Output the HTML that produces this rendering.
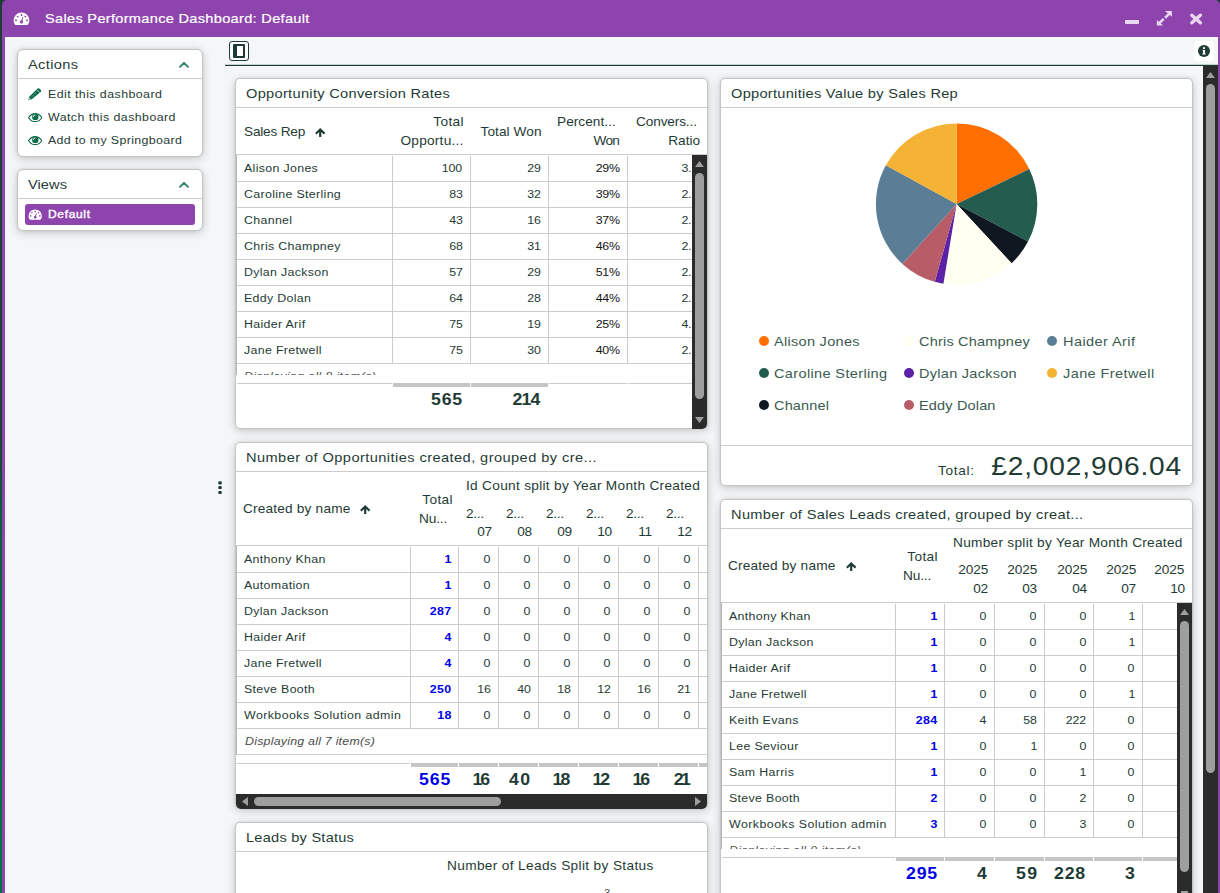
<!DOCTYPE html>
<html><head><meta charset="utf-8"><title>Sales Performance Dashboard</title>
<style>
*{box-sizing:border-box;margin:0;padding:0}
html,body{width:1220px;height:893px;overflow:hidden;background:#1d3f37;background:linear-gradient(to bottom,#1d3f37 0,#1d3f37 48%,#0f5a40 58%,#02704a 100%);font-family:"Liberation Sans",sans-serif;color:#1f3b35}
.a{position:absolute}
.t{position:absolute;white-space:nowrap}
.panel{position:absolute;background:#fff;border:1px solid #c4c4c4;box-shadow:0 2px 10px rgba(0,0,0,.19),0 0 3px rgba(0,0,0,.08)}
#clip{position:absolute;left:0;top:0;width:1220px;height:893px;overflow:hidden}
</style></head><body><div id="clip">
<div class="a" style="left:2px;top:0px;width:1218px;height:893px;background:#8e44ad;border-top-left-radius:5px;border-top-right-radius:5px"></div>
<div class="a" style="left:5px;top:37px;width:1213px;height:856px;background:#f4f6f8;"></div>
<svg class="a" style="left:12.6px;top:11.7px" width="17" height="14" viewBox="0 0 18 15" preserveAspectRatio="none"><path d="M9 0.6 A8.3 8.3 0 0 0 0.7 8.9 C0.7 10.6 1.2 12.2 2 13.4 C2.2 13.7 2.5 13.8 2.8 13.8 L15.2 13.8 C15.5 13.8 15.8 13.7 16 13.4 C16.8 12.2 17.3 10.6 17.3 8.9 A8.3 8.3 0 0 0 9 0.6 Z" fill="#fff"/><g fill="#8e44ad"><circle cx="9" cy="3.2" r="1"/><circle cx="4.9" cy="4.9" r="1"/><circle cx="13.1" cy="4.9" r="1"/><circle cx="3.2" cy="8.9" r="1"/><circle cx="14.8" cy="8.9" r="1"/><circle cx="9" cy="10.6" r="1.7"/><path d="M8.4 10.4 L10 5.4 L10.9 5.7 L9.6 10.8 Z"/></g></svg>
<div class="t" style="top:9.35px;font-size:13.4px;line-height:20px;left:45.4px;color:#fff;letter-spacing:0.272px;transform:scaleX(1.09);transform-origin:0 50%;-webkit-text-stroke:.2px #fff;">Sales Performance Dashboard: Default</div>
<div class="a" style="left:1125.2px;top:20px;width:13.6px;height:4px;background:#ead8f3;border-radius:1px"></div>
<svg class="a" style="left:1156px;top:10px" width="17" height="17" viewBox="0 0 17 17"><g fill="#ead8f3"><path d="M9.0 1.0 L15.9 1.0 L15.9 6.8 Z"/><path d="M0.9 9.9 L0.9 15.6 L7.1 15.6 Z"/></g><g stroke="#ead8f3" stroke-width="2.5" fill="none"><path d="M14 2.9 L9.1 7.8"/><path d="M2.8 13.7 L7.7 8.9"/></g></svg>
<svg class="a" style="left:1189px;top:12px" width="14" height="14" viewBox="0 0 14 14"><path d="M2.8 3.2 L11.4 10.8 M11.4 3.2 L2.8 10.8" stroke="#ead8f3" stroke-width="3.3" stroke-linecap="round" fill="none"/></svg>
<div class="panel" style="left:17px;top:49px;width:186px;height:108px;border-radius:6px"></div>
<div class="a" style="left:18px;top:78px;width:184px;height:1px;background:#cccccc;"></div>
<div class="t" style="top:55.15px;font-size:13.4px;line-height:20px;left:28.4px;letter-spacing:0.321px;transform:scaleX(1.09);transform-origin:0 50%;">Actions</div>
<svg class="a" style="left:179px;top:61px" width="10" height="7" viewBox="0 0 10 7"><path d="M1 5.8 L5 1.8 L9 5.8" stroke="#2f8265" stroke-width="1.9" fill="none" stroke-linecap="round" stroke-linejoin="round"/></svg>
<div class="panel" style="left:17px;top:169px;width:186px;height:62px;border-radius:6px"></div>
<div class="a" style="left:18px;top:198px;width:184px;height:1px;background:#cccccc;"></div>
<div class="t" style="top:175.15px;font-size:13.4px;line-height:20px;left:28.4px;letter-spacing:0.069px;transform:scaleX(1.09);transform-origin:0 50%;">Views</div>
<svg class="a" style="left:179px;top:181px" width="10" height="7" viewBox="0 0 10 7"><path d="M1 5.8 L5 1.8 L9 5.8" stroke="#2f8265" stroke-width="1.9" fill="none" stroke-linecap="round" stroke-linejoin="round"/></svg>
<svg class="a" style="left:28px;top:87.8px" width="13.4" height="12.4" viewBox="0 0 13.4 12.4"><path d="M0.3 12.2 L1.2 8.7 L9.6 0.5 Q10.4 0 11.3 0.5 L12.9 2.1 Q13.4 2.9 12.9 3.7 L3.8 11.3 Z" fill="#0d6b47"/><path d="M8.7 1.5 L11.8 4.6" stroke="#fff" stroke-width="0.7" fill="none"/><path d="M3.6 8.9 L9 3.6" stroke="#fff" stroke-width="0.5" stroke-dasharray="1 0.6" fill="none" opacity=".8"/><path d="M1.0 11.5 L1.5 9.7 L2.8 11 Z" fill="#fff"/></svg>
<svg class="a" style="left:28px;top:112.9px" width="14.4" height="9.2" viewBox="0 0 14.4 9.2"><path d="M0.5 4.7 C2 2.2 4.4 0.6 7.2 0.6 C10 0.6 12.4 2.2 13.9 4.7 C12.4 7.1 10 8.6 7.2 8.6 C4.4 8.6 2 7.1 0.5 4.7 Z" fill="#fff" stroke="#0d6b47" stroke-width="1.15"/><circle cx="7.3" cy="3.9" r="3.2" fill="#0d6b47"/><path d="M5.3 3.6 A1.9 1.9 0 0 1 7 1.9" stroke="#fff" stroke-width="0.9" fill="none" stroke-linecap="round"/></svg>
<svg class="a" style="left:28px;top:135.9px" width="14.4" height="9.2" viewBox="0 0 14.4 9.2"><path d="M0.5 4.7 C2 2.2 4.4 0.6 7.2 0.6 C10 0.6 12.4 2.2 13.9 4.7 C12.4 7.1 10 8.6 7.2 8.6 C4.4 8.6 2 7.1 0.5 4.7 Z" fill="#fff" stroke="#0d6b47" stroke-width="1.15"/><circle cx="7.3" cy="3.9" r="3.2" fill="#0d6b47"/><path d="M5.3 3.6 A1.9 1.9 0 0 1 7 1.9" stroke="#fff" stroke-width="0.9" fill="none" stroke-linecap="round"/></svg>
<div class="t" style="top:83.85px;font-size:11.7px;line-height:20px;left:48.4px;letter-spacing:0.410px;transform:scaleX(1.06);transform-origin:0 50%;">Edit this dashboard</div>
<div class="t" style="top:106.85px;font-size:11.7px;line-height:20px;left:48.4px;letter-spacing:0.403px;transform:scaleX(1.06);transform-origin:0 50%;">Watch this dashboard</div>
<div class="t" style="top:129.85px;font-size:11.7px;line-height:20px;left:48.4px;letter-spacing:0.337px;transform:scaleX(1.06);transform-origin:0 50%;">Add to my Springboard</div>
<div class="a" style="left:25px;top:204px;width:170px;height:21px;background:#8e44ad;border-radius:3px"></div>
<svg class="a" style="left:27.9px;top:208.9px" width="14.4" height="11.6" viewBox="0 0 18 15" preserveAspectRatio="none"><path d="M9 0.6 A8.3 8.3 0 0 0 0.7 8.9 C0.7 10.6 1.2 12.2 2 13.4 C2.2 13.7 2.5 13.8 2.8 13.8 L15.2 13.8 C15.5 13.8 15.8 13.7 16 13.4 C16.8 12.2 17.3 10.6 17.3 8.9 A8.3 8.3 0 0 0 9 0.6 Z" fill="#fff"/><g fill="#8e44ad"><circle cx="9" cy="3.2" r="1"/><circle cx="4.9" cy="4.9" r="1"/><circle cx="13.1" cy="4.9" r="1"/><circle cx="3.2" cy="8.9" r="1"/><circle cx="14.8" cy="8.9" r="1"/><circle cx="9" cy="10.6" r="1.7"/><path d="M8.4 10.4 L10 5.4 L10.9 5.7 L9.6 10.8 Z"/></g></svg>
<div class="t" style="top:204.35px;font-size:11.3px;line-height:20px;left:48.2px;color:#fff;letter-spacing:0.636px;transform:scaleX(1.06);transform-origin:0 50%;-webkit-text-stroke:.4px #fff;">Default</div>
<svg class="a" style="left:218px;top:480px" width="5" height="15" viewBox="0 0 5 15"><g fill="#1f3b35"><rect x="0.3" y="1.3" width="3.5" height="3.2" rx="1.2"/><rect x="0.3" y="6.1" width="3.5" height="3.0" rx="1.2"/><rect x="0.3" y="10.9" width="3.5" height="3.0" rx="1.2"/></g></svg>
<div class="a" style="left:229px;top:41px;width:20px;height:20px;background:#fff;border:1px solid #1f3b35;border-radius:3px"></div>
<div class="a" style="left:233px;top:44px;width:12px;height:14px;background:transparent;border:2px solid #1f3b35;border-left-width:4px;border-radius:1px"></div>
<div class="a" style="left:225px;top:65px;width:993px;height:1px;background:#1f3b35;"></div>
<div class="a" style="left:225px;top:64px;width:993px;height:1px;background:rgba(31,59,53,.22);"></div>
<div class="a" style="left:1194px;top:41px;width:20px;height:20px;background:#fff;border-radius:3px"></div>
<svg class="a" style="left:1198px;top:45px" width="12" height="12" viewBox="0 0 12 12"><circle cx="6" cy="6" r="6" fill="#1f3b35"/><circle cx="6" cy="3.1" r="1.15" fill="#fff"/><path d="M4.6 5 L7 5 L7 8.4 L7.7 8.4 L7.7 9.5 L4.4 9.5 L4.4 8.4 L5.1 8.4 L5.1 6.1 L4.6 6.1 Z" fill="#fff"/></svg>
<div class="a" style="left:1203px;top:66px;width:15px;height:827px;background:#2b2b2b;"></div>
<svg class="a" style="left:1206px;top:72px" width="9" height="6" viewBox="0 0 9 6"><path d="M4.5 0 L9 6 L0 6 Z" fill="#9e9e9e"/></svg>
<div class="a" style="left:1206px;top:84px;width:9px;height:689px;background:#9e9e9e;border-radius:4.5px"></div>
<div class="panel" style="left:235px;top:78px;width:473px;height:351px;border-radius:5px"></div>
<div class="a" style="left:236px;top:107px;width:471px;height:1px;background:#cccccc;"></div>
<div class="t" style="top:84.15px;font-size:13.4px;line-height:20px;left:246.4px;letter-spacing:0.283px;transform:scaleX(1.09);transform-origin:0 50%;">Opportunity Conversion Rates</div>
<div class="a" style="left:236px;top:154px;width:471px;height:1px;background:#cccccc;"></div>
<div class="t" style="top:121.65px;font-size:12.9px;line-height:20px;left:243.6px;letter-spacing:-0.199px;transform:scaleX(1.06);transform-origin:0 50%;">Sales Rep</div>
<svg class="a" style="left:314.5px;top:127.8px" width="10.4" height="9.2" viewBox="0 0 10.4 9.2"><path d="M5.2 0 L10.3 4.9 L8.8 6.4 L6.3 4.0 L6.3 9.2 L4.1 9.2 L4.1 4.0 L1.6 6.4 L0.1 4.9 Z" fill="#1f3b35"/></svg>
<div class="t" style="top:111.65px;font-size:12.9px;line-height:20px;right:756.02px;letter-spacing:0.358px;transform:scaleX(1.06);transform-origin:100% 50%;">Total</div>
<div class="t" style="top:130.65px;font-size:12.9px;line-height:20px;right:756.16px;letter-spacing:0.230px;transform:scaleX(1.06);transform-origin:100% 50%;">Opportu...</div>
<div class="t" style="top:121.65px;font-size:12.9px;line-height:20px;right:678.54px;letter-spacing:0.053px;transform:scaleX(1.06);transform-origin:100% 50%;">Total Won</div>
<div class="t" style="top:111.65px;font-size:12.9px;line-height:20px;left:556.6px;letter-spacing:0.029px;transform:scaleX(1.06);transform-origin:0 50%;">Percent...</div>
<div class="t" style="top:130.65px;font-size:12.9px;line-height:20px;right:600.33px;letter-spacing:-0.693px;transform:scaleX(1.06);transform-origin:100% 50%;">Won</div>
<div class="t" style="top:111.65px;font-size:12.9px;line-height:20px;left:635.6px;letter-spacing:-0.138px;transform:scaleX(1.06);transform-origin:0 50%;">Convers...</div>
<div class="t" style="top:130.65px;font-size:12.9px;line-height:20px;right:519.98px;letter-spacing:0.018px;transform:scaleX(1.06);transform-origin:100% 50%;">Ratio</div>
<div class="a" style="left:236px;top:155px;width:1px;height:220px;background:#b8b8b8;"></div>
<div class="a" style="left:237px;top:181px;width:455px;height:1px;background:#cccccc;"></div>
<div class="t" style="top:158.35px;font-size:11.7px;line-height:20px;left:244.4px;letter-spacing:0.305px;transform:scaleX(1.06);transform-origin:0 50%;">Alison Jones</div>
<div class="t" style="top:158.35px;font-size:11.7px;line-height:20px;right:757.61px;letter-spacing:-0.200px;transform:scaleX(1.06);transform-origin:100% 50%;">100</div>
<div class="t" style="top:158.35px;font-size:11.7px;line-height:20px;right:679.61px;letter-spacing:-0.200px;transform:scaleX(1.06);transform-origin:100% 50%;">29</div>
<div class="t" style="top:158.35px;font-size:11.7px;line-height:20px;right:600.01px;color:#151515;letter-spacing:-0.200px;transform:scaleX(1.06);transform-origin:100% 50%;">29%</div>
<div class="t" style="top:158.35px;font-size:11.7px;line-height:20px;right:528.61px;letter-spacing:-0.200px;transform:scaleX(1.06);transform-origin:100% 50%;">3.</div>
<div class="a" style="left:237px;top:207px;width:455px;height:1px;background:#cccccc;"></div>
<div class="t" style="top:184.35px;font-size:11.7px;line-height:20px;left:244.4px;letter-spacing:0.305px;transform:scaleX(1.06);transform-origin:0 50%;">Caroline Sterling</div>
<div class="t" style="top:184.35px;font-size:11.7px;line-height:20px;right:757.61px;letter-spacing:-0.200px;transform:scaleX(1.06);transform-origin:100% 50%;">83</div>
<div class="t" style="top:184.35px;font-size:11.7px;line-height:20px;right:679.61px;letter-spacing:-0.200px;transform:scaleX(1.06);transform-origin:100% 50%;">32</div>
<div class="t" style="top:184.35px;font-size:11.7px;line-height:20px;right:600.01px;color:#151515;letter-spacing:-0.200px;transform:scaleX(1.06);transform-origin:100% 50%;">39%</div>
<div class="t" style="top:184.35px;font-size:11.7px;line-height:20px;right:528.61px;letter-spacing:-0.200px;transform:scaleX(1.06);transform-origin:100% 50%;">2.</div>
<div class="a" style="left:237px;top:233px;width:455px;height:1px;background:#cccccc;"></div>
<div class="t" style="top:210.35px;font-size:11.7px;line-height:20px;left:244.4px;letter-spacing:0.305px;transform:scaleX(1.06);transform-origin:0 50%;">Channel</div>
<div class="t" style="top:210.35px;font-size:11.7px;line-height:20px;right:757.61px;letter-spacing:-0.200px;transform:scaleX(1.06);transform-origin:100% 50%;">43</div>
<div class="t" style="top:210.35px;font-size:11.7px;line-height:20px;right:679.61px;letter-spacing:-0.200px;transform:scaleX(1.06);transform-origin:100% 50%;">16</div>
<div class="t" style="top:210.35px;font-size:11.7px;line-height:20px;right:600.01px;color:#151515;letter-spacing:-0.200px;transform:scaleX(1.06);transform-origin:100% 50%;">37%</div>
<div class="t" style="top:210.35px;font-size:11.7px;line-height:20px;right:528.61px;letter-spacing:-0.200px;transform:scaleX(1.06);transform-origin:100% 50%;">2.</div>
<div class="a" style="left:237px;top:259px;width:455px;height:1px;background:#cccccc;"></div>
<div class="t" style="top:236.35px;font-size:11.7px;line-height:20px;left:244.4px;letter-spacing:0.305px;transform:scaleX(1.06);transform-origin:0 50%;">Chris Champney</div>
<div class="t" style="top:236.35px;font-size:11.7px;line-height:20px;right:757.61px;letter-spacing:-0.200px;transform:scaleX(1.06);transform-origin:100% 50%;">68</div>
<div class="t" style="top:236.35px;font-size:11.7px;line-height:20px;right:679.61px;letter-spacing:-0.200px;transform:scaleX(1.06);transform-origin:100% 50%;">31</div>
<div class="t" style="top:236.35px;font-size:11.7px;line-height:20px;right:600.01px;color:#151515;letter-spacing:-0.200px;transform:scaleX(1.06);transform-origin:100% 50%;">46%</div>
<div class="t" style="top:236.35px;font-size:11.7px;line-height:20px;right:528.61px;letter-spacing:-0.200px;transform:scaleX(1.06);transform-origin:100% 50%;">2.</div>
<div class="a" style="left:237px;top:285px;width:455px;height:1px;background:#cccccc;"></div>
<div class="t" style="top:262.35px;font-size:11.7px;line-height:20px;left:244.4px;letter-spacing:0.305px;transform:scaleX(1.06);transform-origin:0 50%;">Dylan Jackson</div>
<div class="t" style="top:262.35px;font-size:11.7px;line-height:20px;right:757.61px;letter-spacing:-0.200px;transform:scaleX(1.06);transform-origin:100% 50%;">57</div>
<div class="t" style="top:262.35px;font-size:11.7px;line-height:20px;right:679.61px;letter-spacing:-0.200px;transform:scaleX(1.06);transform-origin:100% 50%;">29</div>
<div class="t" style="top:262.35px;font-size:11.7px;line-height:20px;right:600.01px;color:#151515;letter-spacing:-0.200px;transform:scaleX(1.06);transform-origin:100% 50%;">51%</div>
<div class="t" style="top:262.35px;font-size:11.7px;line-height:20px;right:528.61px;letter-spacing:-0.200px;transform:scaleX(1.06);transform-origin:100% 50%;">2.</div>
<div class="a" style="left:237px;top:311px;width:455px;height:1px;background:#cccccc;"></div>
<div class="t" style="top:288.35px;font-size:11.7px;line-height:20px;left:244.4px;letter-spacing:0.305px;transform:scaleX(1.06);transform-origin:0 50%;">Eddy Dolan</div>
<div class="t" style="top:288.35px;font-size:11.7px;line-height:20px;right:757.61px;letter-spacing:-0.200px;transform:scaleX(1.06);transform-origin:100% 50%;">64</div>
<div class="t" style="top:288.35px;font-size:11.7px;line-height:20px;right:679.61px;letter-spacing:-0.200px;transform:scaleX(1.06);transform-origin:100% 50%;">28</div>
<div class="t" style="top:288.35px;font-size:11.7px;line-height:20px;right:600.01px;color:#151515;letter-spacing:-0.200px;transform:scaleX(1.06);transform-origin:100% 50%;">44%</div>
<div class="t" style="top:288.35px;font-size:11.7px;line-height:20px;right:528.61px;letter-spacing:-0.200px;transform:scaleX(1.06);transform-origin:100% 50%;">2.</div>
<div class="a" style="left:237px;top:337px;width:455px;height:1px;background:#cccccc;"></div>
<div class="t" style="top:314.35px;font-size:11.7px;line-height:20px;left:244.4px;letter-spacing:0.305px;transform:scaleX(1.06);transform-origin:0 50%;">Haider Arif</div>
<div class="t" style="top:314.35px;font-size:11.7px;line-height:20px;right:757.61px;letter-spacing:-0.200px;transform:scaleX(1.06);transform-origin:100% 50%;">75</div>
<div class="t" style="top:314.35px;font-size:11.7px;line-height:20px;right:679.61px;letter-spacing:-0.200px;transform:scaleX(1.06);transform-origin:100% 50%;">19</div>
<div class="t" style="top:314.35px;font-size:11.7px;line-height:20px;right:600.01px;color:#151515;letter-spacing:-0.200px;transform:scaleX(1.06);transform-origin:100% 50%;">25%</div>
<div class="t" style="top:314.35px;font-size:11.7px;line-height:20px;right:528.61px;letter-spacing:-0.200px;transform:scaleX(1.06);transform-origin:100% 50%;">4.</div>
<div class="a" style="left:237px;top:363px;width:455px;height:1px;background:#cccccc;"></div>
<div class="t" style="top:340.35px;font-size:11.7px;line-height:20px;left:244.4px;letter-spacing:0.305px;transform:scaleX(1.06);transform-origin:0 50%;">Jane Fretwell</div>
<div class="t" style="top:340.35px;font-size:11.7px;line-height:20px;right:757.61px;letter-spacing:-0.200px;transform:scaleX(1.06);transform-origin:100% 50%;">75</div>
<div class="t" style="top:340.35px;font-size:11.7px;line-height:20px;right:679.61px;letter-spacing:-0.200px;transform:scaleX(1.06);transform-origin:100% 50%;">30</div>
<div class="t" style="top:340.35px;font-size:11.7px;line-height:20px;right:600.01px;color:#151515;letter-spacing:-0.200px;transform:scaleX(1.06);transform-origin:100% 50%;">40%</div>
<div class="t" style="top:340.35px;font-size:11.7px;line-height:20px;right:528.61px;letter-spacing:-0.200px;transform:scaleX(1.06);transform-origin:100% 50%;">2.</div>
<div class="a" style="left:392px;top:156px;width:1px;height:208px;background:#cccccc;"></div>
<div class="a" style="left:470px;top:156px;width:1px;height:208px;background:#cccccc;"></div>
<div class="a" style="left:548px;top:156px;width:1px;height:208px;background:#cccccc;"></div>
<div class="a" style="left:627px;top:156px;width:1px;height:208px;background:#cccccc;"></div>
<div class="a" style="left:237px;top:364px;width:455px;height:11px;overflow:hidden"><div class="t" style="left:7.4px;top:2.3px;font-size:11.7px;line-height:20px;font-style:italic;color:#555;letter-spacing:.3px;transform:scaleX(1.06);transform-origin:0 50%">Displaying all 8 item(s)</div></div>
<div class="a" style="left:237px;top:383px;width:155px;height:1px;background:#cccccc;"></div>
<div class="a" style="left:549px;top:383px;width:78px;height:1px;background:#cccccc;"></div>
<div class="a" style="left:628px;top:383px;width:64px;height:1px;background:#cccccc;"></div>
<div class="a" style="left:393px;top:383px;width:77px;height:4px;background:#c6c6c6;"></div>
<div class="a" style="left:471px;top:383px;width:77px;height:4px;background:#c6c6c6;"></div>
<div class="a" style="left:627px;top:383px;width:1px;height:1px;background:#fff;"></div>
<div class="a" style="left:392px;top:383px;width:1px;height:1px;background:#fff;"></div>
<div class="t" style="top:388.95px;font-size:16.1px;line-height:20px;right:756.87px;font-weight:700;letter-spacing:0.659px;transform:scaleX(1.1);transform-origin:100% 50%;">565</div>
<div class="t" style="top:388.95px;font-size:16.1px;line-height:20px;right:680.47px;font-weight:700;letter-spacing:-0.795px;transform:scaleX(1.1);transform-origin:100% 50%;">214</div>
<div class="a" style="left:692px;top:155px;width:15px;height:274px;background:#2b2b2b;border-bottom-right-radius:5px"></div>
<svg class="a" style="left:695px;top:161px" width="9" height="6" viewBox="0 0 9 6"><path d="M4.5 0 L9 6 L0 6 Z" fill="#9e9e9e"/></svg>
<svg class="a" style="left:695.1px;top:417.3px" width="9" height="6" viewBox="0 0 9 6"><path d="M4.5 6 L9 0 L0 0 Z" fill="#9e9e9e"/></svg>
<div class="a" style="left:695px;top:173px;width:9px;height:226px;background:#9e9e9e;border-radius:4.5px"></div>
<div class="panel" style="left:720px;top:78px;width:473px;height:408px;border-radius:5px"></div>
<div class="a" style="left:721px;top:107px;width:471px;height:1px;background:#cccccc;"></div>
<div class="t" style="top:84.15px;font-size:13.4px;line-height:20px;left:731.4px;letter-spacing:0.259px;transform:scaleX(1.09);transform-origin:0 50%;">Opportunities Value by Sales Rep</div>
<svg class="a" style="left:0;top:0" width="1220" height="893" viewBox="0 0 1220 893"><path d="M956.6 204.1 L956.60 123.40 A80.7 80.7 0 0 1 1029.29 169.04 Z" fill="#ff6f00"/><path d="M956.6 204.1 L1029.29 169.04 A80.7 80.7 0 0 1 1028.05 241.61 Z" fill="#245c4f"/><path d="M956.6 204.1 L1028.05 241.61 A80.7 80.7 0 0 1 1011.53 263.22 Z" fill="#0f1820"/><path d="M956.6 204.1 L1011.53 263.22 A80.7 80.7 0 0 1 943.42 283.72 Z" fill="#fffff2"/><path d="M956.6 204.1 L943.42 283.72 A80.7 80.7 0 0 1 934.76 281.79 Z" fill="#5b21a6"/><path d="M956.6 204.1 L934.76 281.79 A80.7 80.7 0 0 1 902.39 263.88 Z" fill="#b85c68"/><path d="M956.6 204.1 L902.39 263.88 A80.7 80.7 0 0 1 885.81 165.35 Z" fill="#5b7d95"/><path d="M956.6 204.1 L885.81 165.35 A80.7 80.7 0 0 1 956.60 123.40 Z" fill="#f5b335"/></svg>
<div class="a" style="left:758.6px;top:336px;width:10px;height:10px;background:#ff6f00;border-radius:50%"></div>
<div class="t" style="top:331.75px;font-size:13.2px;line-height:20px;left:774.4px;color:#3b5a51;letter-spacing:0.270px;transform:scaleX(1.1);transform-origin:0 50%;">Alison Jones</div>
<div class="a" style="left:758.6px;top:368px;width:10px;height:10px;background:#245c4f;border-radius:50%"></div>
<div class="t" style="top:363.75px;font-size:13.2px;line-height:20px;left:774.4px;color:#3b5a51;letter-spacing:0.333px;transform:scaleX(1.1);transform-origin:0 50%;">Caroline Sterling</div>
<div class="a" style="left:758.6px;top:400px;width:10px;height:10px;background:#0f1820;border-radius:50%"></div>
<div class="t" style="top:395.75px;font-size:13.2px;line-height:20px;left:774.4px;color:#3b5a51;letter-spacing:0.138px;transform:scaleX(1.1);transform-origin:0 50%;">Channel</div>
<div class="a" style="left:903.6px;top:336px;width:10px;height:10px;background:#fffff2;border-radius:50%"></div>
<div class="t" style="top:331.75px;font-size:13.2px;line-height:20px;left:919.4px;color:#3b5a51;letter-spacing:0.183px;transform:scaleX(1.1);transform-origin:0 50%;">Chris Champney</div>
<div class="a" style="left:903.6px;top:368px;width:10px;height:10px;background:#5b21a6;border-radius:50%"></div>
<div class="t" style="top:363.75px;font-size:13.2px;line-height:20px;left:919.4px;color:#3b5a51;letter-spacing:0.252px;transform:scaleX(1.1);transform-origin:0 50%;">Dylan Jackson</div>
<div class="a" style="left:903.6px;top:400px;width:10px;height:10px;background:#b85c68;border-radius:50%"></div>
<div class="t" style="top:395.75px;font-size:13.2px;line-height:20px;left:919.4px;color:#3b5a51;letter-spacing:0.144px;transform:scaleX(1.1);transform-origin:0 50%;">Eddy Dolan</div>
<div class="a" style="left:1047.1px;top:336px;width:10px;height:10px;background:#5b7d95;border-radius:50%"></div>
<div class="t" style="top:331.75px;font-size:13.2px;line-height:20px;left:1062.8999999999999px;color:#3b5a51;letter-spacing:0.383px;transform:scaleX(1.1);transform-origin:0 50%;">Haider Arif</div>
<div class="a" style="left:1047.1px;top:368px;width:10px;height:10px;background:#f5b335;border-radius:50%"></div>
<div class="t" style="top:363.75px;font-size:13.2px;line-height:20px;left:1062.8999999999999px;color:#3b5a51;letter-spacing:0.371px;transform:scaleX(1.1);transform-origin:0 50%;">Jane Fretwell</div>
<div class="a" style="left:721px;top:445px;width:471px;height:1px;background:#cccccc;"></div>
<div class="t" style="top:461.15px;font-size:12.9px;line-height:20px;right:245.70px;letter-spacing:0.664px;transform:scaleX(1.06);transform-origin:100% 50%;">Total:</div>
<div class="t" style="top:449.85px;font-size:25.8px;line-height:32px;right:38.15px;letter-spacing:0.776px;transform:scaleX(1.09);transform-origin:100% 50%;">£2,002,906.04</div>
<div class="panel" style="left:235px;top:442px;width:473px;height:367px;border-radius:5px"></div>
<div class="a" style="left:236px;top:471px;width:471px;height:1px;background:#cccccc;"></div>
<div class="t" style="top:448.15px;font-size:13.4px;line-height:20px;left:246.4px;letter-spacing:0.396px;transform:scaleX(1.09);transform-origin:0 50%;">Number of Opportunities created, grouped by cre...</div>
<div class="a" style="left:236px;top:545px;width:471px;height:1px;background:#cccccc;"></div>
<div class="t" style="top:475.95px;font-size:12.9px;line-height:20px;left:466.4px;letter-spacing:0.283px;transform:scaleX(1.06);transform-origin:0 50%;">Id Count split by Year Month Created</div>
<div class="t" style="top:498.65px;font-size:12.9px;line-height:20px;left:243.0px;letter-spacing:0.169px;transform:scaleX(1.06);transform-origin:0 50%;">Created by name</div>
<svg class="a" style="left:360.4px;top:504.6px" width="10.4" height="9.2" viewBox="0 0 10.4 9.2"><path d="M5.2 0 L10.3 4.9 L8.8 6.4 L6.3 4.0 L6.3 9.2 L4.1 9.2 L4.1 4.0 L1.6 6.4 L0.1 4.9 Z" fill="#1f3b35"/></svg>
<div class="t" style="top:489.85px;font-size:12.9px;line-height:20px;right:767.32px;letter-spacing:0.358px;transform:scaleX(1.06);transform-origin:100% 50%;">Total</div>
<div class="t" style="top:508.65px;font-size:12.9px;line-height:20px;left:418.5px;letter-spacing:-0.136px;transform:scaleX(1.06);transform-origin:0 50%;">Nu...</div>
<div class="t" style="top:504.05px;font-size:12.9px;line-height:20px;left:466.4px;letter-spacing:-0.315px;transform:scaleX(1.06);transform-origin:0 50%;">2...</div>
<div class="t" style="top:522.05px;font-size:12.9px;line-height:20px;right:728.31px;letter-spacing:-0.200px;transform:scaleX(1.06);transform-origin:100% 50%;">07</div>
<div class="t" style="top:504.05px;font-size:12.9px;line-height:20px;left:506.4px;letter-spacing:-0.315px;transform:scaleX(1.06);transform-origin:0 50%;">2...</div>
<div class="t" style="top:522.05px;font-size:12.9px;line-height:20px;right:688.31px;letter-spacing:-0.200px;transform:scaleX(1.06);transform-origin:100% 50%;">08</div>
<div class="t" style="top:504.05px;font-size:12.9px;line-height:20px;left:546.4px;letter-spacing:-0.315px;transform:scaleX(1.06);transform-origin:0 50%;">2...</div>
<div class="t" style="top:522.05px;font-size:12.9px;line-height:20px;right:648.31px;letter-spacing:-0.200px;transform:scaleX(1.06);transform-origin:100% 50%;">09</div>
<div class="t" style="top:504.05px;font-size:12.9px;line-height:20px;left:586.4px;letter-spacing:-0.315px;transform:scaleX(1.06);transform-origin:0 50%;">2...</div>
<div class="t" style="top:522.05px;font-size:12.9px;line-height:20px;right:608.31px;letter-spacing:-0.200px;transform:scaleX(1.06);transform-origin:100% 50%;">10</div>
<div class="t" style="top:504.05px;font-size:12.9px;line-height:20px;left:626.4px;letter-spacing:-0.315px;transform:scaleX(1.06);transform-origin:0 50%;">2...</div>
<div class="t" style="top:522.05px;font-size:12.9px;line-height:20px;right:568.31px;letter-spacing:-0.200px;transform:scaleX(1.06);transform-origin:100% 50%;">11</div>
<div class="t" style="top:504.05px;font-size:12.9px;line-height:20px;left:666.4px;letter-spacing:-0.315px;transform:scaleX(1.06);transform-origin:0 50%;">2...</div>
<div class="t" style="top:522.05px;font-size:12.9px;line-height:20px;right:528.31px;letter-spacing:-0.200px;transform:scaleX(1.06);transform-origin:100% 50%;">12</div>
<div class="a" style="left:236px;top:546px;width:1px;height:209px;background:#b8b8b8;"></div>
<div class="a" style="left:237px;top:572px;width:470px;height:1px;background:#cccccc;"></div>
<div class="t" style="top:549.35px;font-size:11.7px;line-height:20px;left:244.0px;letter-spacing:0.305px;transform:scaleX(1.06);transform-origin:0 50%;">Anthony Khan</div>
<div class="t" style="top:549.35px;font-size:11.7px;line-height:20px;right:767.90px;font-weight:700;color:#0000e6;letter-spacing:0.381px;transform:scaleX(1.06);transform-origin:100% 50%;">1</div>
<div class="t" style="top:549.35px;font-size:11.7px;line-height:20px;right:729.41px;letter-spacing:-0.200px;transform:scaleX(1.06);transform-origin:100% 50%;">0</div>
<div class="t" style="top:549.35px;font-size:11.7px;line-height:20px;right:689.41px;letter-spacing:-0.200px;transform:scaleX(1.06);transform-origin:100% 50%;">0</div>
<div class="t" style="top:549.35px;font-size:11.7px;line-height:20px;right:649.41px;letter-spacing:-0.200px;transform:scaleX(1.06);transform-origin:100% 50%;">0</div>
<div class="t" style="top:549.35px;font-size:11.7px;line-height:20px;right:609.41px;letter-spacing:-0.200px;transform:scaleX(1.06);transform-origin:100% 50%;">0</div>
<div class="t" style="top:549.35px;font-size:11.7px;line-height:20px;right:569.41px;letter-spacing:-0.200px;transform:scaleX(1.06);transform-origin:100% 50%;">0</div>
<div class="t" style="top:549.35px;font-size:11.7px;line-height:20px;right:529.41px;letter-spacing:-0.200px;transform:scaleX(1.06);transform-origin:100% 50%;">0</div>
<div class="a" style="left:237px;top:598px;width:470px;height:1px;background:#cccccc;"></div>
<div class="t" style="top:575.35px;font-size:11.7px;line-height:20px;left:244.0px;letter-spacing:0.305px;transform:scaleX(1.06);transform-origin:0 50%;">Automation</div>
<div class="t" style="top:575.35px;font-size:11.7px;line-height:20px;right:767.90px;font-weight:700;color:#0000e6;letter-spacing:0.381px;transform:scaleX(1.06);transform-origin:100% 50%;">1</div>
<div class="t" style="top:575.35px;font-size:11.7px;line-height:20px;right:729.41px;letter-spacing:-0.200px;transform:scaleX(1.06);transform-origin:100% 50%;">0</div>
<div class="t" style="top:575.35px;font-size:11.7px;line-height:20px;right:689.41px;letter-spacing:-0.200px;transform:scaleX(1.06);transform-origin:100% 50%;">0</div>
<div class="t" style="top:575.35px;font-size:11.7px;line-height:20px;right:649.41px;letter-spacing:-0.200px;transform:scaleX(1.06);transform-origin:100% 50%;">0</div>
<div class="t" style="top:575.35px;font-size:11.7px;line-height:20px;right:609.41px;letter-spacing:-0.200px;transform:scaleX(1.06);transform-origin:100% 50%;">0</div>
<div class="t" style="top:575.35px;font-size:11.7px;line-height:20px;right:569.41px;letter-spacing:-0.200px;transform:scaleX(1.06);transform-origin:100% 50%;">0</div>
<div class="t" style="top:575.35px;font-size:11.7px;line-height:20px;right:529.41px;letter-spacing:-0.200px;transform:scaleX(1.06);transform-origin:100% 50%;">0</div>
<div class="a" style="left:237px;top:624px;width:470px;height:1px;background:#cccccc;"></div>
<div class="t" style="top:601.35px;font-size:11.7px;line-height:20px;left:244.0px;letter-spacing:0.305px;transform:scaleX(1.06);transform-origin:0 50%;">Dylan Jackson</div>
<div class="t" style="top:601.35px;font-size:11.7px;line-height:20px;right:768.60px;font-weight:700;color:#0000e6;letter-spacing:0.381px;transform:scaleX(1.06);transform-origin:100% 50%;">287</div>
<div class="t" style="top:601.35px;font-size:11.7px;line-height:20px;right:729.41px;letter-spacing:-0.200px;transform:scaleX(1.06);transform-origin:100% 50%;">0</div>
<div class="t" style="top:601.35px;font-size:11.7px;line-height:20px;right:689.41px;letter-spacing:-0.200px;transform:scaleX(1.06);transform-origin:100% 50%;">0</div>
<div class="t" style="top:601.35px;font-size:11.7px;line-height:20px;right:649.41px;letter-spacing:-0.200px;transform:scaleX(1.06);transform-origin:100% 50%;">0</div>
<div class="t" style="top:601.35px;font-size:11.7px;line-height:20px;right:609.41px;letter-spacing:-0.200px;transform:scaleX(1.06);transform-origin:100% 50%;">0</div>
<div class="t" style="top:601.35px;font-size:11.7px;line-height:20px;right:569.41px;letter-spacing:-0.200px;transform:scaleX(1.06);transform-origin:100% 50%;">0</div>
<div class="t" style="top:601.35px;font-size:11.7px;line-height:20px;right:529.41px;letter-spacing:-0.200px;transform:scaleX(1.06);transform-origin:100% 50%;">0</div>
<div class="a" style="left:237px;top:650px;width:470px;height:1px;background:#cccccc;"></div>
<div class="t" style="top:627.35px;font-size:11.7px;line-height:20px;left:244.0px;letter-spacing:0.305px;transform:scaleX(1.06);transform-origin:0 50%;">Haider Arif</div>
<div class="t" style="top:627.35px;font-size:11.7px;line-height:20px;right:768.60px;font-weight:700;color:#0000e6;letter-spacing:0.381px;transform:scaleX(1.06);transform-origin:100% 50%;">4</div>
<div class="t" style="top:627.35px;font-size:11.7px;line-height:20px;right:729.41px;letter-spacing:-0.200px;transform:scaleX(1.06);transform-origin:100% 50%;">0</div>
<div class="t" style="top:627.35px;font-size:11.7px;line-height:20px;right:689.41px;letter-spacing:-0.200px;transform:scaleX(1.06);transform-origin:100% 50%;">0</div>
<div class="t" style="top:627.35px;font-size:11.7px;line-height:20px;right:649.41px;letter-spacing:-0.200px;transform:scaleX(1.06);transform-origin:100% 50%;">0</div>
<div class="t" style="top:627.35px;font-size:11.7px;line-height:20px;right:609.41px;letter-spacing:-0.200px;transform:scaleX(1.06);transform-origin:100% 50%;">0</div>
<div class="t" style="top:627.35px;font-size:11.7px;line-height:20px;right:569.41px;letter-spacing:-0.200px;transform:scaleX(1.06);transform-origin:100% 50%;">0</div>
<div class="t" style="top:627.35px;font-size:11.7px;line-height:20px;right:529.41px;letter-spacing:-0.200px;transform:scaleX(1.06);transform-origin:100% 50%;">0</div>
<div class="a" style="left:237px;top:676px;width:470px;height:1px;background:#cccccc;"></div>
<div class="t" style="top:653.35px;font-size:11.7px;line-height:20px;left:244.0px;letter-spacing:0.305px;transform:scaleX(1.06);transform-origin:0 50%;">Jane Fretwell</div>
<div class="t" style="top:653.35px;font-size:11.7px;line-height:20px;right:768.60px;font-weight:700;color:#0000e6;letter-spacing:0.381px;transform:scaleX(1.06);transform-origin:100% 50%;">4</div>
<div class="t" style="top:653.35px;font-size:11.7px;line-height:20px;right:729.41px;letter-spacing:-0.200px;transform:scaleX(1.06);transform-origin:100% 50%;">0</div>
<div class="t" style="top:653.35px;font-size:11.7px;line-height:20px;right:689.41px;letter-spacing:-0.200px;transform:scaleX(1.06);transform-origin:100% 50%;">0</div>
<div class="t" style="top:653.35px;font-size:11.7px;line-height:20px;right:649.41px;letter-spacing:-0.200px;transform:scaleX(1.06);transform-origin:100% 50%;">0</div>
<div class="t" style="top:653.35px;font-size:11.7px;line-height:20px;right:609.41px;letter-spacing:-0.200px;transform:scaleX(1.06);transform-origin:100% 50%;">0</div>
<div class="t" style="top:653.35px;font-size:11.7px;line-height:20px;right:569.41px;letter-spacing:-0.200px;transform:scaleX(1.06);transform-origin:100% 50%;">0</div>
<div class="t" style="top:653.35px;font-size:11.7px;line-height:20px;right:529.41px;letter-spacing:-0.200px;transform:scaleX(1.06);transform-origin:100% 50%;">0</div>
<div class="a" style="left:237px;top:702px;width:470px;height:1px;background:#cccccc;"></div>
<div class="t" style="top:679.35px;font-size:11.7px;line-height:20px;left:244.0px;letter-spacing:0.305px;transform:scaleX(1.06);transform-origin:0 50%;">Steve Booth</div>
<div class="t" style="top:679.35px;font-size:11.7px;line-height:20px;right:768.60px;font-weight:700;color:#0000e6;letter-spacing:0.381px;transform:scaleX(1.06);transform-origin:100% 50%;">250</div>
<div class="t" style="top:679.35px;font-size:11.7px;line-height:20px;right:729.41px;letter-spacing:-0.200px;transform:scaleX(1.06);transform-origin:100% 50%;">16</div>
<div class="t" style="top:679.35px;font-size:11.7px;line-height:20px;right:689.41px;letter-spacing:-0.200px;transform:scaleX(1.06);transform-origin:100% 50%;">40</div>
<div class="t" style="top:679.35px;font-size:11.7px;line-height:20px;right:649.41px;letter-spacing:-0.200px;transform:scaleX(1.06);transform-origin:100% 50%;">18</div>
<div class="t" style="top:679.35px;font-size:11.7px;line-height:20px;right:609.41px;letter-spacing:-0.200px;transform:scaleX(1.06);transform-origin:100% 50%;">12</div>
<div class="t" style="top:679.35px;font-size:11.7px;line-height:20px;right:569.41px;letter-spacing:-0.200px;transform:scaleX(1.06);transform-origin:100% 50%;">16</div>
<div class="t" style="top:679.35px;font-size:11.7px;line-height:20px;right:529.41px;letter-spacing:-0.200px;transform:scaleX(1.06);transform-origin:100% 50%;">21</div>
<div class="a" style="left:237px;top:728px;width:470px;height:1px;background:#cccccc;"></div>
<div class="t" style="top:705.35px;font-size:11.7px;line-height:20px;left:244.0px;letter-spacing:0.398px;transform:scaleX(1.06);transform-origin:0 50%;">Workbooks Solution admin</div>
<div class="t" style="top:705.35px;font-size:11.7px;line-height:20px;right:768.60px;font-weight:700;color:#0000e6;letter-spacing:0.381px;transform:scaleX(1.06);transform-origin:100% 50%;">18</div>
<div class="t" style="top:705.35px;font-size:11.7px;line-height:20px;right:729.41px;letter-spacing:-0.200px;transform:scaleX(1.06);transform-origin:100% 50%;">0</div>
<div class="t" style="top:705.35px;font-size:11.7px;line-height:20px;right:689.41px;letter-spacing:-0.200px;transform:scaleX(1.06);transform-origin:100% 50%;">0</div>
<div class="t" style="top:705.35px;font-size:11.7px;line-height:20px;right:649.41px;letter-spacing:-0.200px;transform:scaleX(1.06);transform-origin:100% 50%;">0</div>
<div class="t" style="top:705.35px;font-size:11.7px;line-height:20px;right:609.41px;letter-spacing:-0.200px;transform:scaleX(1.06);transform-origin:100% 50%;">0</div>
<div class="t" style="top:705.35px;font-size:11.7px;line-height:20px;right:569.41px;letter-spacing:-0.200px;transform:scaleX(1.06);transform-origin:100% 50%;">0</div>
<div class="t" style="top:705.35px;font-size:11.7px;line-height:20px;right:529.41px;letter-spacing:-0.200px;transform:scaleX(1.06);transform-origin:100% 50%;">0</div>
<div class="a" style="left:410px;top:547px;width:1px;height:182px;background:#cccccc;"></div>
<div class="a" style="left:458px;top:547px;width:1px;height:182px;background:#cccccc;"></div>
<div class="a" style="left:498px;top:547px;width:1px;height:182px;background:#cccccc;"></div>
<div class="a" style="left:538px;top:547px;width:1px;height:182px;background:#cccccc;"></div>
<div class="a" style="left:578px;top:547px;width:1px;height:182px;background:#cccccc;"></div>
<div class="a" style="left:618px;top:547px;width:1px;height:182px;background:#cccccc;"></div>
<div class="a" style="left:658px;top:547px;width:1px;height:182px;background:#cccccc;"></div>
<div class="a" style="left:698px;top:547px;width:1px;height:182px;background:#cccccc;"></div>
<div class="t" style="top:731.15px;font-size:11.7px;line-height:20px;left:244.9px;color:#4d4d4d;letter-spacing:0.215px;font-style:italic;transform:scaleX(1.06);transform-origin:0 50%;">Displaying all 7 item(s)</div>
<div class="a" style="left:237px;top:754px;width:470px;height:1px;background:#d0d0d0;"></div>
<div class="a" style="left:237px;top:763px;width:173px;height:1px;background:#cccccc;"></div>
<div class="a" style="left:411px;top:763px;width:47px;height:4px;background:#c6c6c6;"></div>
<div class="a" style="left:459px;top:763px;width:39px;height:4px;background:#c6c6c6;"></div>
<div class="a" style="left:499px;top:763px;width:39px;height:4px;background:#c6c6c6;"></div>
<div class="a" style="left:539px;top:763px;width:39px;height:4px;background:#c6c6c6;"></div>
<div class="a" style="left:579px;top:763px;width:39px;height:4px;background:#c6c6c6;"></div>
<div class="a" style="left:619px;top:763px;width:39px;height:4px;background:#c6c6c6;"></div>
<div class="a" style="left:659px;top:763px;width:39px;height:4px;background:#c6c6c6;"></div>
<div class="a" style="left:699px;top:763px;width:8px;height:4px;background:#c6c6c6;"></div>
<div class="t" style="top:769.05px;font-size:16.1px;line-height:20px;right:768.27px;font-weight:700;color:#0000e6;letter-spacing:0.841px;transform:scaleX(1.1);transform-origin:100% 50%;">565</div>
<div class="t" style="top:769.05px;font-size:16.1px;line-height:20px;right:731.80px;font-weight:700;letter-spacing:-2.000px;transform:scaleX(1.1);transform-origin:100% 50%;">16</div>
<div class="t" style="top:769.05px;font-size:16.1px;line-height:20px;right:688.20px;font-weight:700;letter-spacing:1.273px;transform:scaleX(1.1);transform-origin:100% 50%;">40</div>
<div class="t" style="top:769.05px;font-size:16.1px;line-height:20px;right:651.50px;font-weight:700;letter-spacing:-1.727px;transform:scaleX(1.1);transform-origin:100% 50%;">18</div>
<div class="t" style="top:769.05px;font-size:16.1px;line-height:20px;right:611.80px;font-weight:700;letter-spacing:-2.000px;transform:scaleX(1.1);transform-origin:100% 50%;">12</div>
<div class="t" style="top:769.05px;font-size:16.1px;line-height:20px;right:571.80px;font-weight:700;letter-spacing:-2.000px;transform:scaleX(1.1);transform-origin:100% 50%;">16</div>
<div class="t" style="top:769.05px;font-size:16.1px;line-height:20px;right:532.10px;font-weight:700;letter-spacing:-2.272px;transform:scaleX(1.1);transform-origin:100% 50%;">21</div>
<div class="a" style="left:236px;top:794px;width:471px;height:15px;background:#2b2b2b;border-bottom-left-radius:5px;border-bottom-right-radius:5px"></div>
<svg class="a" style="left:242px;top:797px" width="6" height="9" viewBox="0 0 6 9"><path d="M0 4.5 L6 0 L6 9 Z" fill="#9e9e9e"/></svg>
<svg class="a" style="left:695px;top:797px" width="6" height="9" viewBox="0 0 6 9"><path d="M6 4.5 L0 0 L0 9 Z" fill="#9e9e9e"/></svg>
<div class="a" style="left:254px;top:797px;width:247px;height:9px;background:#9e9e9e;border-radius:4.5px"></div>
<div class="panel" style="left:720px;top:499px;width:473px;height:420px;border-radius:5px"></div>
<div class="a" style="left:721px;top:528px;width:471px;height:1px;background:#cccccc;"></div>
<div class="t" style="top:505.15px;font-size:13.4px;line-height:20px;left:731.4px;letter-spacing:0.320px;transform:scaleX(1.09);transform-origin:0 50%;">Number of Sales Leads created, grouped by creat...</div>
<div class="a" style="left:721px;top:602px;width:471px;height:1px;background:#cccccc;"></div>
<div class="t" style="top:532.55px;font-size:12.9px;line-height:20px;left:952.5px;letter-spacing:0.262px;transform:scaleX(1.06);transform-origin:0 50%;">Number split by Year Month Created</div>
<div class="t" style="top:555.75px;font-size:12.9px;line-height:20px;left:727.9px;letter-spacing:0.169px;transform:scaleX(1.06);transform-origin:0 50%;">Created by name</div>
<svg class="a" style="left:845.6px;top:561.6px" width="10.4" height="9.2" viewBox="0 0 10.4 9.2"><path d="M5.2 0 L10.3 4.9 L8.8 6.4 L6.3 4.0 L6.3 9.2 L4.1 9.2 L4.1 4.0 L1.6 6.4 L0.1 4.9 Z" fill="#1f3b35"/></svg>
<div class="t" style="top:546.65px;font-size:12.9px;line-height:20px;right:281.52px;letter-spacing:0.358px;transform:scaleX(1.06);transform-origin:100% 50%;">Total</div>
<div class="t" style="top:565.95px;font-size:12.9px;line-height:20px;left:903.4px;letter-spacing:-0.136px;transform:scaleX(1.06);transform-origin:0 50%;">Nu...</div>
<div class="t" style="top:560.05px;font-size:12.9px;line-height:20px;right:232.34px;letter-spacing:-0.132px;transform:scaleX(1.06);transform-origin:100% 50%;">2025</div>
<div class="t" style="top:579.35px;font-size:12.9px;line-height:20px;right:232.41px;letter-spacing:-0.200px;transform:scaleX(1.06);transform-origin:100% 50%;">02</div>
<div class="t" style="top:560.05px;font-size:12.9px;line-height:20px;right:182.64px;letter-spacing:-0.132px;transform:scaleX(1.06);transform-origin:100% 50%;">2025</div>
<div class="t" style="top:579.35px;font-size:12.9px;line-height:20px;right:182.71px;letter-spacing:-0.200px;transform:scaleX(1.06);transform-origin:100% 50%;">03</div>
<div class="t" style="top:560.05px;font-size:12.9px;line-height:20px;right:133.24px;letter-spacing:-0.132px;transform:scaleX(1.06);transform-origin:100% 50%;">2025</div>
<div class="t" style="top:579.35px;font-size:12.9px;line-height:20px;right:133.31px;letter-spacing:-0.200px;transform:scaleX(1.06);transform-origin:100% 50%;">04</div>
<div class="t" style="top:560.05px;font-size:12.9px;line-height:20px;right:84.34px;letter-spacing:-0.132px;transform:scaleX(1.06);transform-origin:100% 50%;">2025</div>
<div class="t" style="top:579.35px;font-size:12.9px;line-height:20px;right:84.41px;letter-spacing:-0.200px;transform:scaleX(1.06);transform-origin:100% 50%;">07</div>
<div class="t" style="top:560.05px;font-size:12.9px;line-height:20px;right:35.44px;letter-spacing:-0.132px;transform:scaleX(1.06);transform-origin:100% 50%;">2025</div>
<div class="t" style="top:579.35px;font-size:12.9px;line-height:20px;right:35.51px;letter-spacing:-0.200px;transform:scaleX(1.06);transform-origin:100% 50%;">10</div>
<div class="a" style="left:721px;top:603px;width:1px;height:246px;background:#b8b8b8;"></div>
<div class="a" style="left:722px;top:629px;width:455px;height:1px;background:#cccccc;"></div>
<div class="t" style="top:606.35px;font-size:11.7px;line-height:20px;left:728.8px;letter-spacing:0.305px;transform:scaleX(1.06);transform-origin:0 50%;">Anthony Khan</div>
<div class="t" style="top:606.35px;font-size:11.7px;line-height:20px;right:281.80px;font-weight:700;color:#0000e6;letter-spacing:0.381px;transform:scaleX(1.06);transform-origin:100% 50%;">1</div>
<div class="t" style="top:606.35px;font-size:11.7px;line-height:20px;right:233.61px;letter-spacing:-0.200px;transform:scaleX(1.06);transform-origin:100% 50%;">0</div>
<div class="t" style="top:606.35px;font-size:11.7px;line-height:20px;right:183.51px;letter-spacing:-0.200px;transform:scaleX(1.06);transform-origin:100% 50%;">0</div>
<div class="t" style="top:606.35px;font-size:11.7px;line-height:20px;right:134.11px;letter-spacing:-0.200px;transform:scaleX(1.06);transform-origin:100% 50%;">0</div>
<div class="t" style="top:606.35px;font-size:11.7px;line-height:20px;right:84.61px;letter-spacing:-0.200px;transform:scaleX(1.06);transform-origin:100% 50%;">1</div>
<div class="a" style="left:722px;top:655px;width:455px;height:1px;background:#cccccc;"></div>
<div class="t" style="top:632.35px;font-size:11.7px;line-height:20px;left:728.8px;letter-spacing:0.305px;transform:scaleX(1.06);transform-origin:0 50%;">Dylan Jackson</div>
<div class="t" style="top:632.35px;font-size:11.7px;line-height:20px;right:281.80px;font-weight:700;color:#0000e6;letter-spacing:0.381px;transform:scaleX(1.06);transform-origin:100% 50%;">1</div>
<div class="t" style="top:632.35px;font-size:11.7px;line-height:20px;right:233.61px;letter-spacing:-0.200px;transform:scaleX(1.06);transform-origin:100% 50%;">0</div>
<div class="t" style="top:632.35px;font-size:11.7px;line-height:20px;right:183.51px;letter-spacing:-0.200px;transform:scaleX(1.06);transform-origin:100% 50%;">0</div>
<div class="t" style="top:632.35px;font-size:11.7px;line-height:20px;right:134.11px;letter-spacing:-0.200px;transform:scaleX(1.06);transform-origin:100% 50%;">0</div>
<div class="t" style="top:632.35px;font-size:11.7px;line-height:20px;right:84.61px;letter-spacing:-0.200px;transform:scaleX(1.06);transform-origin:100% 50%;">1</div>
<div class="a" style="left:722px;top:681px;width:455px;height:1px;background:#cccccc;"></div>
<div class="t" style="top:658.35px;font-size:11.7px;line-height:20px;left:728.8px;letter-spacing:0.305px;transform:scaleX(1.06);transform-origin:0 50%;">Haider Arif</div>
<div class="t" style="top:658.35px;font-size:11.7px;line-height:20px;right:281.80px;font-weight:700;color:#0000e6;letter-spacing:0.381px;transform:scaleX(1.06);transform-origin:100% 50%;">1</div>
<div class="t" style="top:658.35px;font-size:11.7px;line-height:20px;right:233.61px;letter-spacing:-0.200px;transform:scaleX(1.06);transform-origin:100% 50%;">0</div>
<div class="t" style="top:658.35px;font-size:11.7px;line-height:20px;right:183.51px;letter-spacing:-0.200px;transform:scaleX(1.06);transform-origin:100% 50%;">0</div>
<div class="t" style="top:658.35px;font-size:11.7px;line-height:20px;right:134.11px;letter-spacing:-0.200px;transform:scaleX(1.06);transform-origin:100% 50%;">0</div>
<div class="t" style="top:658.35px;font-size:11.7px;line-height:20px;right:85.31px;letter-spacing:-0.200px;transform:scaleX(1.06);transform-origin:100% 50%;">0</div>
<div class="a" style="left:722px;top:707px;width:455px;height:1px;background:#cccccc;"></div>
<div class="t" style="top:684.35px;font-size:11.7px;line-height:20px;left:728.8px;letter-spacing:0.305px;transform:scaleX(1.06);transform-origin:0 50%;">Jane Fretwell</div>
<div class="t" style="top:684.35px;font-size:11.7px;line-height:20px;right:281.80px;font-weight:700;color:#0000e6;letter-spacing:0.381px;transform:scaleX(1.06);transform-origin:100% 50%;">1</div>
<div class="t" style="top:684.35px;font-size:11.7px;line-height:20px;right:233.61px;letter-spacing:-0.200px;transform:scaleX(1.06);transform-origin:100% 50%;">0</div>
<div class="t" style="top:684.35px;font-size:11.7px;line-height:20px;right:183.51px;letter-spacing:-0.200px;transform:scaleX(1.06);transform-origin:100% 50%;">0</div>
<div class="t" style="top:684.35px;font-size:11.7px;line-height:20px;right:134.11px;letter-spacing:-0.200px;transform:scaleX(1.06);transform-origin:100% 50%;">0</div>
<div class="t" style="top:684.35px;font-size:11.7px;line-height:20px;right:84.61px;letter-spacing:-0.200px;transform:scaleX(1.06);transform-origin:100% 50%;">1</div>
<div class="a" style="left:722px;top:733px;width:455px;height:1px;background:#cccccc;"></div>
<div class="t" style="top:710.35px;font-size:11.7px;line-height:20px;left:728.8px;letter-spacing:0.305px;transform:scaleX(1.06);transform-origin:0 50%;">Keith Evans</div>
<div class="t" style="top:710.35px;font-size:11.7px;line-height:20px;right:282.50px;font-weight:700;color:#0000e6;letter-spacing:0.381px;transform:scaleX(1.06);transform-origin:100% 50%;">284</div>
<div class="t" style="top:710.35px;font-size:11.7px;line-height:20px;right:233.61px;letter-spacing:-0.200px;transform:scaleX(1.06);transform-origin:100% 50%;">4</div>
<div class="t" style="top:710.35px;font-size:11.7px;line-height:20px;right:183.51px;letter-spacing:-0.200px;transform:scaleX(1.06);transform-origin:100% 50%;">58</div>
<div class="t" style="top:710.35px;font-size:11.7px;line-height:20px;right:134.11px;letter-spacing:-0.200px;transform:scaleX(1.06);transform-origin:100% 50%;">222</div>
<div class="t" style="top:710.35px;font-size:11.7px;line-height:20px;right:85.31px;letter-spacing:-0.200px;transform:scaleX(1.06);transform-origin:100% 50%;">0</div>
<div class="a" style="left:722px;top:759px;width:455px;height:1px;background:#cccccc;"></div>
<div class="t" style="top:736.35px;font-size:11.7px;line-height:20px;left:728.8px;letter-spacing:0.305px;transform:scaleX(1.06);transform-origin:0 50%;">Lee Seviour</div>
<div class="t" style="top:736.35px;font-size:11.7px;line-height:20px;right:281.80px;font-weight:700;color:#0000e6;letter-spacing:0.381px;transform:scaleX(1.06);transform-origin:100% 50%;">1</div>
<div class="t" style="top:736.35px;font-size:11.7px;line-height:20px;right:233.61px;letter-spacing:-0.200px;transform:scaleX(1.06);transform-origin:100% 50%;">0</div>
<div class="t" style="top:736.35px;font-size:11.7px;line-height:20px;right:182.81px;letter-spacing:-0.200px;transform:scaleX(1.06);transform-origin:100% 50%;">1</div>
<div class="t" style="top:736.35px;font-size:11.7px;line-height:20px;right:134.11px;letter-spacing:-0.200px;transform:scaleX(1.06);transform-origin:100% 50%;">0</div>
<div class="t" style="top:736.35px;font-size:11.7px;line-height:20px;right:85.31px;letter-spacing:-0.200px;transform:scaleX(1.06);transform-origin:100% 50%;">0</div>
<div class="a" style="left:722px;top:785px;width:455px;height:1px;background:#cccccc;"></div>
<div class="t" style="top:762.35px;font-size:11.7px;line-height:20px;left:728.8px;letter-spacing:0.305px;transform:scaleX(1.06);transform-origin:0 50%;">Sam Harris</div>
<div class="t" style="top:762.35px;font-size:11.7px;line-height:20px;right:281.80px;font-weight:700;color:#0000e6;letter-spacing:0.381px;transform:scaleX(1.06);transform-origin:100% 50%;">1</div>
<div class="t" style="top:762.35px;font-size:11.7px;line-height:20px;right:233.61px;letter-spacing:-0.200px;transform:scaleX(1.06);transform-origin:100% 50%;">0</div>
<div class="t" style="top:762.35px;font-size:11.7px;line-height:20px;right:183.51px;letter-spacing:-0.200px;transform:scaleX(1.06);transform-origin:100% 50%;">0</div>
<div class="t" style="top:762.35px;font-size:11.7px;line-height:20px;right:133.41px;letter-spacing:-0.200px;transform:scaleX(1.06);transform-origin:100% 50%;">1</div>
<div class="t" style="top:762.35px;font-size:11.7px;line-height:20px;right:85.31px;letter-spacing:-0.200px;transform:scaleX(1.06);transform-origin:100% 50%;">0</div>
<div class="a" style="left:722px;top:811px;width:455px;height:1px;background:#cccccc;"></div>
<div class="t" style="top:788.35px;font-size:11.7px;line-height:20px;left:728.8px;letter-spacing:0.305px;transform:scaleX(1.06);transform-origin:0 50%;">Steve Booth</div>
<div class="t" style="top:788.35px;font-size:11.7px;line-height:20px;right:282.50px;font-weight:700;color:#0000e6;letter-spacing:0.381px;transform:scaleX(1.06);transform-origin:100% 50%;">2</div>
<div class="t" style="top:788.35px;font-size:11.7px;line-height:20px;right:233.61px;letter-spacing:-0.200px;transform:scaleX(1.06);transform-origin:100% 50%;">0</div>
<div class="t" style="top:788.35px;font-size:11.7px;line-height:20px;right:183.51px;letter-spacing:-0.200px;transform:scaleX(1.06);transform-origin:100% 50%;">0</div>
<div class="t" style="top:788.35px;font-size:11.7px;line-height:20px;right:134.11px;letter-spacing:-0.200px;transform:scaleX(1.06);transform-origin:100% 50%;">2</div>
<div class="t" style="top:788.35px;font-size:11.7px;line-height:20px;right:85.31px;letter-spacing:-0.200px;transform:scaleX(1.06);transform-origin:100% 50%;">0</div>
<div class="a" style="left:722px;top:837px;width:455px;height:1px;background:#cccccc;"></div>
<div class="t" style="top:814.35px;font-size:11.7px;line-height:20px;left:728.8px;letter-spacing:0.423px;transform:scaleX(1.06);transform-origin:0 50%;">Workbooks Solution admin</div>
<div class="t" style="top:814.35px;font-size:11.7px;line-height:20px;right:282.50px;font-weight:700;color:#0000e6;letter-spacing:0.381px;transform:scaleX(1.06);transform-origin:100% 50%;">3</div>
<div class="t" style="top:814.35px;font-size:11.7px;line-height:20px;right:233.61px;letter-spacing:-0.200px;transform:scaleX(1.06);transform-origin:100% 50%;">0</div>
<div class="t" style="top:814.35px;font-size:11.7px;line-height:20px;right:183.51px;letter-spacing:-0.200px;transform:scaleX(1.06);transform-origin:100% 50%;">0</div>
<div class="t" style="top:814.35px;font-size:11.7px;line-height:20px;right:134.11px;letter-spacing:-0.200px;transform:scaleX(1.06);transform-origin:100% 50%;">3</div>
<div class="t" style="top:814.35px;font-size:11.7px;line-height:20px;right:85.31px;letter-spacing:-0.200px;transform:scaleX(1.06);transform-origin:100% 50%;">0</div>
<div class="a" style="left:895px;top:604px;width:1px;height:234px;background:#cccccc;"></div>
<div class="a" style="left:944px;top:604px;width:1px;height:234px;background:#cccccc;"></div>
<div class="a" style="left:994px;top:604px;width:1px;height:234px;background:#cccccc;"></div>
<div class="a" style="left:1044px;top:604px;width:1px;height:234px;background:#cccccc;"></div>
<div class="a" style="left:1093px;top:604px;width:1px;height:234px;background:#cccccc;"></div>
<div class="a" style="left:1142px;top:604px;width:1px;height:234px;background:#cccccc;"></div>
<div class="a" style="left:722px;top:838px;width:455px;height:11px;overflow:hidden"><div class="t" style="left:7.4px;top:2.3px;font-size:11.7px;line-height:20px;font-style:italic;color:#555;letter-spacing:.3px;transform:scaleX(1.06);transform-origin:0 50%">Displaying all 9 item(s)</div></div>
<div class="a" style="left:722px;top:857px;width:173px;height:1px;background:#cccccc;"></div>
<div class="a" style="left:896px;top:857px;width:48px;height:4px;background:#c6c6c6;"></div>
<div class="a" style="left:945px;top:857px;width:49px;height:4px;background:#c6c6c6;"></div>
<div class="a" style="left:995px;top:857px;width:49px;height:4px;background:#c6c6c6;"></div>
<div class="a" style="left:1045px;top:857px;width:48px;height:4px;background:#c6c6c6;"></div>
<div class="a" style="left:1094px;top:857px;width:48px;height:4px;background:#c6c6c6;"></div>
<div class="a" style="left:1143px;top:857px;width:34px;height:4px;background:#c6c6c6;"></div>
<div class="t" style="top:863.05px;font-size:16.1px;line-height:20px;right:282.42px;font-weight:700;color:#0000e6;letter-spacing:0.705px;transform:scaleX(1.1);transform-origin:100% 50%;">295</div>
<div class="t" style="top:863.05px;font-size:16.1px;line-height:20px;right:233.24px;font-weight:700;letter-spacing:0.148px;transform:scaleX(1.1);transform-origin:100% 50%;">4</div>
<div class="t" style="top:863.05px;font-size:16.1px;line-height:20px;right:181.70px;font-weight:700;letter-spacing:1.273px;transform:scaleX(1.1);transform-origin:100% 50%;">59</div>
<div class="t" style="top:863.05px;font-size:16.1px;line-height:20px;right:133.92px;font-weight:700;letter-spacing:0.705px;transform:scaleX(1.1);transform-origin:100% 50%;">228</div>
<div class="t" style="top:863.05px;font-size:16.1px;line-height:20px;right:85.04px;font-weight:700;letter-spacing:0.148px;transform:scaleX(1.1);transform-origin:100% 50%;">3</div>
<div class="a" style="left:1177px;top:603px;width:15px;height:300px;background:#2b2b2b;"></div>
<svg class="a" style="left:1180px;top:609px" width="9" height="6" viewBox="0 0 9 6"><path d="M4.5 0 L9 6 L0 6 Z" fill="#9e9e9e"/></svg>
<div class="a" style="left:1180px;top:621px;width:9px;height:251px;background:#9e9e9e;border-radius:4.5px"></div>
<div class="a" style="left:1181px;top:891px;width:7px;height:2px;background:#9e9e9e;"></div>
<div class="panel" style="left:235px;top:822px;width:473px;height:120px;border-radius:5px"></div>
<div class="a" style="left:236px;top:851px;width:471px;height:1px;background:#cccccc;"></div>
<div class="t" style="top:828.15px;font-size:13.4px;line-height:20px;left:246.4px;letter-spacing:0.213px;transform:scaleX(1.09);transform-origin:0 50%;">Leads by Status</div>
<div class="t" style="top:855.95px;font-size:12.9px;line-height:20px;left:446.9px;letter-spacing:0.327px;transform:scaleX(1.06);transform-origin:0 50%;">Number of Leads Split by Status</div>
<div class="t" style="top:883.55px;font-size:10px;line-height:20px;left:406.79999999999995px;width:400px;text-align:center;color:#444;letter-spacing:-0.200px;transform:scaleX(1.06);transform-origin:50% 50%;">3</div>
</div></body></html>
